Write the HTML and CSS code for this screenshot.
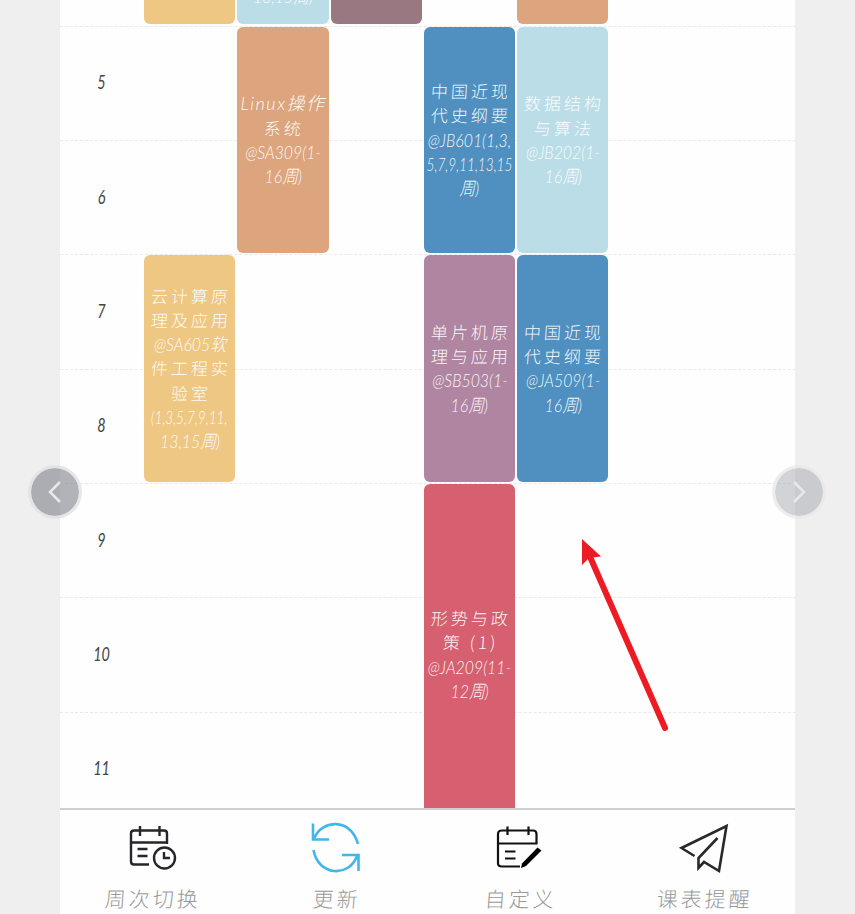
FILE: index.html
```html
<!DOCTYPE html>
<html lang="zh-CN">
<head>
<meta charset="utf-8">
<title>课表</title>
<link rel="stylesheet" href="styles.css">
</head>
<body>
<main class="phone">
  <section class="timetable">
    <div class="rule r2"></div><div class="rule r3"></div><div class="rule r4"></div><div class="rule r5"></div><div class="rule r6"></div><div class="rule r7"></div><div class="rule r8"></div>
    <div class="period r2">5</div><div class="period r3">6</div><div class="period r4">7</div><div class="period r5">8</div><div class="period r6">9</div><div class="period r7">10</div><div class="period r8">11</div>

    <article class="course d1 top yellow"></article>
    <article class="course d2 top sky"><p class="n">13,15周)</p></article>
    <article class="course d3 top plum"></article>
    <article class="course d5 top orange"></article>

    <article class="course d2 s5 orange"><p class="m">Linux操作</p><p>系统</p><p class="n">@SA309(1-</p><p class="n">16周)</p></article>
    <article class="course d4 s5 blue"><p>中国近现</p><p>代史纲要</p><p class="n">@JB601(1,3,</p><p class="n t">5,7,9,11,13,15</p><p class="n">周)</p></article>
    <article class="course d5 s5 sky"><p>数据结构</p><p>与算法</p><p class="n">@JB202(1-</p><p class="n">16周)</p></article>

    <article class="course d1 s7 yellow"><p>云计算原</p><p>理及应用</p><p class="n">@SA605软</p><p>件工程实</p><p>验室</p><p class="n t">(1,3,5,7,9,11,</p><p class="n">13,15周)</p></article>
    <article class="course d4 s7 mauve"><p>单片机原</p><p>理与应用</p><p class="n">@SB503(1-</p><p class="n">16周)</p></article>
    <article class="course d5 s7 blue"><p>中国近现</p><p>代史纲要</p><p class="n">@JA509(1-</p><p class="n">16周)</p></article>

    <article class="course d4 s9 red"><p>形势与政</p><p>策 (1)</p><p class="n">@JA209(11-</p><p class="n">12周)</p></article>
  </section>

  <nav class="tabs">
    <a class="tab">
      <svg class="icon" viewBox="0 0 54 54" fill="none" stroke="#26252b" stroke-width="2.4">
        <path d="M24 45.500H9Q6 45.500 6 42.500V14.500Q6 11.500 9 11.500H39Q42 11.500 42 14.500V25M6 23.500H42M15 7V17M34.500 7V17M12.500 30H22.500M12.500 37H22.500"/>
        <circle cx="39.500" cy="39" r="10.500"/><path d="M39 33V39H45"/>
      </svg>
      <span>周次切换</span>
    </a>
    <a class="tab">
      <svg class="icon" viewBox="0 0 54 54" fill="none" stroke="#43b5ed" stroke-width="2.600">
        <path d="M4 4.500V20.500H20M5.500 19C12 1 42 -2 49 25M49.500 52V36H33M4.500 31C9 57 40 59 48 37"/>
      </svg>
      <span>更新</span>
    </a>
    <a class="tab">
      <svg class="icon" viewBox="0 0 54 54" fill="none" stroke="#111" stroke-width="2.200">
        <path d="M28 47.500H10Q6 47.500 6 44.500V15Q6 11.500 10 11.500H41Q44.500 11.500 44.500 15V25.500M6 24.500H44.500M15.500 7.500V16M36.500 7.500V16M13 32.500H23.500M13 39.500H23.500"/>
        <path d="M45.500 28.500L49.500 31.500L34 47L29 49L30 44.500Z" fill="#000" stroke="none"/>
      </svg>
      <span>自定义</span>
    </a>
    <a class="tab">
      <svg class="icon" viewBox="0 0 54 54" fill="none" stroke="#29292b" stroke-width="2.600">
        <path d="M18.500 37L5.500 29L50.500 7L43 52L28 43L22.500 49V39L41.500 19"/>
      </svg>
      <span>课表提醒</span>
    </a>
  </nav>
</main>

<button class="arrow prev" aria-label="上一张"><svg viewBox="0 0 54 54"><path d="M32 17L22 27L32 37"/></svg></button>
<button class="arrow next" aria-label="下一张"><svg viewBox="0 0 54 54"><path d="M22 17L32 27L22 37"/></svg></button>
<svg class="pointer" viewBox="0 0 90 196"><path d="M9 20L83 189" stroke="#ed1c24" stroke-width="6" stroke-linecap="round"/><path d="M0 0L19 17.500L7 19L0 26Z" fill="#ed1c24"/></svg>
</body>
</html>
```
FILE: styles.css
```css
* { box-sizing: border-box; }
body { margin: 0; height: 914px; overflow: hidden; background: #efefef; font-family: "Noto Sans CJK SC", sans-serif; }
p { margin: 0; }
.phone { width: 735px; height: 914px; margin-left: 60px; background: #fefefe; display: flex; flex-direction: column; }
.timetable {
  height: 808px; overflow: hidden; display: grid;
  grid-template-columns: 83px repeat(7, 93.3px);
  grid-template-rows: 25.700px repeat(7, 114.350px);
}
.rule { grid-column: 1 / -1; border-top: 1px dashed #e9e9e9; }
.period { grid-column: 1; display: flex; align-items: center; justify-content: center; padding-bottom: 3px; font: italic 20px/1 Lato, sans-serif; color: #444; transform: scaleX(.72); }
.r2 { grid-row: 2; } .r3 { grid-row: 3; } .r4 { grid-row: 4; } .r5 { grid-row: 5; }
.r6 { grid-row: 6; } .r7 { grid-row: 7; } .r8 { grid-row: 8; }
.course {
  margin: 1px 1px 1.500px; border-radius: 6px; overflow: hidden;
  display: flex; flex-direction: column; align-items: center; justify-content: center;
  color: rgba(255, 255, 255, .95);
  font: 300 17px/24.200px "Noto Sans CJK SC", sans-serif; letter-spacing: 3px; white-space: nowrap;
}
.course p { transform: skewX(-4deg); margin-right: -3px; }
.course .n, .course .m { font-family: Lato, "Noto Sans CJK SC", sans-serif; font-weight: 300; font-style: italic; letter-spacing: 0; margin: 0; font-size: 18px; transform: scaleX(.88); }
.course .m { letter-spacing: 1.500px; transform: scaleX(1); }
.course .t { transform: scaleX(.76); }
.d1 { grid-column: 2; } .d2 { grid-column: 3; } .d3 { grid-column: 4; } .d4 { grid-column: 5; } .d5 { grid-column: 6; }
.top { grid-row: 1; margin-top: 0; border-radius: 0 0 6px 6px; justify-content: flex-end; padding-bottom: 16px; }
.s5 { grid-row: 2 / 4; } .s7 { grid-row: 4 / 6; }
.s9 { grid-row: 6 / 9; margin-bottom: 0; height: 341px; }
.yellow { background: #eec783; }
.sky { background: #badde7; }
.plum { background: #9a7881; }
.orange { background: #dca57e; }
.blue { background: #4f90c0; }
.mauve { background: #b085a1; }
.red { background: #d65f70; }
.tabs { height: 106px; border-top: 2px solid #cfcfcf; display: grid; grid-template-columns: repeat(4, 1fr); padding-top: 9px; }
.tab { display: flex; flex-direction: column; align-items: center; gap: 12px; color: #999; font-size: 21px; line-height: 26px; font-weight: 300; letter-spacing: 3px; }
.tab span { transform: skewX(-4deg); margin-right: -3px; }
.icon { width: 54px; height: 54px; overflow: visible; }
.arrow { position: absolute; top: 465px; width: 54px; height: 54px; padding: 0; border: 3px solid rgba(224, 225, 228, .8); border-radius: 50%; background: rgba(126, 128, 138, .6); background-clip: padding-box; }
.arrow svg { width: 54px; height: 54px; margin: -3px; display: block; fill: none; stroke: #e8e8ea; stroke-width: 2.500; }
.prev { left: 28px; }
.next { left: 772px; background-color: rgba(165, 168, 174, .5); border-color: rgba(232, 233, 234, .8); }
.pointer { position: absolute; left: 582px; top: 539px; width: 90px; height: 196px; fill: none; }
```
